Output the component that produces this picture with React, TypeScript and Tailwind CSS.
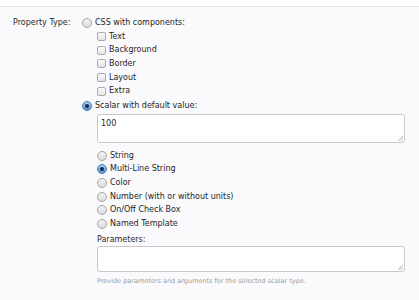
import React from "react";

const font = { fontFamily: '"DejaVu Sans", Verdana, sans-serif' };

function Radio({ checked }: { checked?: boolean }) {
	if (checked) {
		return (
			<span className="flex size-[10px] shrink-0 items-center justify-center rounded-full border border-[#4a7bb5] bg-gradient-to-b from-[#a9cdf2] to-[#4f8fd6]">
				<span className="size-[4px] rounded-full bg-[#1c2a3c]" />
			</span>
		);
	}
	return (
		<span className="size-[10px] shrink-0 rounded-full border border-[#a4a4a4] bg-gradient-to-b from-[#f4f4f4] to-[#dcdcdc]" />
	);
}

function Checkbox() {
	return (
		<span className="size-[9px] shrink-0 rounded-[2px] border border-[#ababab] bg-gradient-to-b from-[#fbfbfb] to-[#e4e4e4]" />
	);
}

function Row({ children, control }: { children: React.ReactNode; control: React.ReactNode }) {
	return (
		<div className="flex h-[13.7px] items-center gap-[3px] text-[8px] text-[#1e1e1e]">
			{control}
			<span>{children}</span>
		</div>
	);
}

function TextBox({ value, className }: { value?: string; className: string }) {
	return (
		<div className={`relative w-[308px] ${className}`}>
			<textarea
				readOnly
				defaultValue={value}
				className="block h-full w-full resize-none rounded-[3px] border border-[#c9c9c9] bg-white px-[3px] py-[3px] text-[8px] leading-[11px] text-[#1e1e1e] outline-none"
				style={font}
			/>
			{/* resize grip */}
			<svg className="absolute bottom-[2px] right-[2px] size-[6px]" viewBox="0 0 6 6">
				<path d="M1 6 L6 1 M3.5 6 L6 3.5" stroke="#9a9a9a" strokeWidth="0.8" />
			</svg>
		</div>
	);
}

const components = ["Text", "Background", "Border", "Layout", "Extra"];
const scalarTypes = [
	{ label: "String" },
	{ label: "Multi-Line String", checked: true },
	{ label: "Color" },
	{ label: "Number (with or without units)" },
	{ label: "On/Off Check Box" },
	{ label: "Named Template" },
];

export default function App() {
	return (
		<div className="h-[300px] w-[419px] overflow-hidden bg-[#fafafc]" style={font}>
			<div className="h-[7px] border-b border-[#e1e9ee] bg-white" />
			<div className="flex pl-[13px] pt-[9px]">
				{/* Label */}
				<div className="w-[69px] shrink-0">
					<div className="flex h-[13.7px] items-center text-[8px] text-[#2a2a2a]">Property Type:</div>
				</div>

				{/* Options */}
				<div className="flex-1">
					<Row control={<Radio />}>CSS with components:</Row>
					<div className="pl-[15px]">
						{components.map((c) => (
							<Row key={c} control={<Checkbox />}>
								{c}
							</Row>
						))}
					</div>
					<div className="mt-[1px]">
						<Row control={<Radio checked />}>Scalar with default value:</Row>
					</div>
					<div className="pl-[15px]">
						<TextBox value="100" className="mt-[1px] h-[29px]" />
						<div className="mt-[6px]">
							{scalarTypes.map((t) => (
								<Row key={t.label} control={<Radio checked={t.checked} />}>
									{t.label}
								</Row>
							))}
						</div>
						<div className="mt-[3px] flex h-[12px] items-center text-[8px] text-[#2a2a2a]">Parameters:</div>
						<TextBox className="h-[26px]" />
						<div className="mt-[4px] text-[6.5px] leading-[10px] text-[#9a9a9a]">
							Provide parameters and arguments for the selected scalar type.
						</div>
					</div>
				</div>
			</div>
		</div>
	);
}
